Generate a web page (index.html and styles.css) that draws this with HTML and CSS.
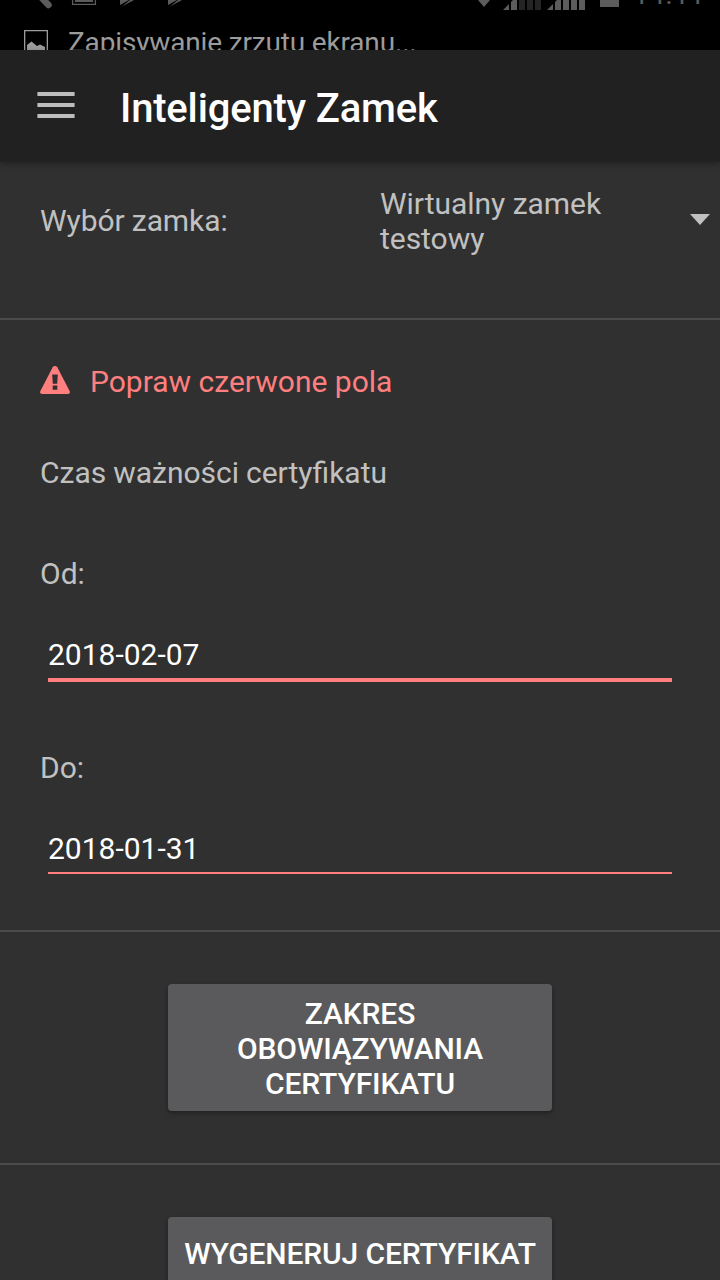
FILE: index.html
```
<!DOCTYPE html>
<html lang="pl">
<head>
<meta charset="utf-8">
<title>Inteligenty Zamek</title>
<link rel="stylesheet" href="styles.css">
</head>
<body>
<div class="screen">
  <div class="status">
    <svg class="status-icons" width="720" height="12" viewBox="0 0 720 12">
      <path d="M38 -6L48.500 5" stroke="#5c5c5c" stroke-width="6.500" stroke-linecap="round"/>
      <path d="M72.600 -16V4.400H95.400V-16" fill="none" stroke="#5c5c5c" stroke-width="1.300"/>
      <path d="M75 -8H93V2H75z" fill="#5c5c5c"/>
      <path d="M76 -3H92V0H76z" fill="#000"/>
      <path d="M120 -3V5L129 0H124V-3zM122 6.500L134 0H130zM168 -3V5L177 0H172V-3zM170 6.500L182 0H178z" fill="#5c5c5c"/>
      <path d="M478 0H490L484 7z" fill="#5c5c5c"/>
      <path d="M503 10L509 4V10zM511 2L513 0H517V10H511zM547 10L553 4V10zM555 2L557 0H561V10H555zM563 0h6V10h-6zM571 0h6V10h-6zM579 0h6V10h-6z" fill="#5c5c5c"/>
      <path d="M519 0h6V10h-6zM527 0h6V10h-6zM535 0h6V10h-6z" fill="#242424"/>
      <path d="M517 0h2V10h-2zM525 0h2V10h-2zM533 0h2V10h-2zM561 0h2V10h-2zM569 0h2V10h-2zM577 0h2V10h-2z" fill="#000"/>
      <path d="M600 0H619V7H600z" fill="#5c5c5c"/>
    </svg>
    <span class="clock">14<span class="colon">:</span>11</span>
    <div class="ticker">
      <svg width="24" height="24" viewBox="0 0 24 24">
        <path d="M.65 .65H23.350V23.350H.65z" fill="none" stroke="#9c9c9c" stroke-width="1.300"/>
        <path d="M3 24V15L7.500 11.500L13 16L16 14.500L21 17V24z" fill="#9c9c9c"/>
      </svg>
      <span>Zapisywanie zrzutu ekranu...</span>
    </div>
  </div>
  <header class="toolbar">
    <svg class="menu" width="38" height="26" viewBox="0 0 38 26">
      <path d="M.4 0H37.600V4H.4zM.4 11H37.600V15H.4zM.4 22H37.600V26H.4z" fill="#bdbdbd"/>
    </svg>
    <h1 class="title">Inteligenty Zamek</h1>
  </header>
  <main>
    <section class="lock-row">
      <span class="lock-label">Wybór zamka:</span>
      <div class="spinner">
        <span class="spinner-text">Wirtualny zamek testowy</span>
        <svg width="20" height="11" viewBox="0 0 20 11"><path d="M0 0H20L10 11z" fill="#c1c1c1"/></svg>
      </div>
    </section>
    <section class="dates">
      <div class="error">
        <svg width="30" height="28" viewBox="0 0 30 28">
          <path d="M15 0Q16.500 0 17.300 1.300L29.600 25Q30.400 27.800 28 28H2Q-.4 27.800 .4 25L12.700 1.300Q13.500 0 15 0z" fill="#ff7f7f"/>
          <path d="M12.200 8.500H17.800L17.200 17.700H12.800zM12.700 19.600H17.300V23.800H12.700z" fill="#303030"/>
        </svg>
        <span>Popraw czerwone pola</span>
      </div>
      <p class="heading">Czas ważności certyfikatu</p>
      <p class="label from">Od:</p>
      <div class="field focused">2018-02-07</div>
      <p class="label to">Do:</p>
      <div class="field">2018-01-31</div>
    </section>
    <section class="action"><button class="btn">Zakres obowiązywania certyfikatu</button></section>
    <section class="action last"><button class="btn single">Wygeneruj certyfikat</button></section>
  </main>
</div>
</body>
</html>
```
FILE: styles.css
```
* { box-sizing: border-box; }
body { margin: 0; background: #303030; }
.screen {
  width: 720px; height: 1280px; overflow: hidden;
  display: flex; flex-direction: column;
  font: 400 30px/35px Roboto, sans-serif; color: #c1c1c1; background: #303030;
}
.status { position: relative; height: 50px; flex: none; overflow: hidden; background: #000; padding-top: 30px; }
.status-icons { position: absolute; left: 0; top: 0; }
.clock { position: absolute; left: 633px; top: -22px; font-size: 28px; line-height: 33px; color: #5c5c5c; white-space: nowrap; }
.colon { margin: 0 1px; }
.ticker { display: flex; gap: 20px; padding-left: 24px; font-size: 28px; line-height: 33px; letter-spacing: -.16px; color: #9c9c9c; white-space: nowrap; }
.ticker span { margin-top: -4px; }
.toolbar {
  position: relative; flex: none; height: 112px; background: #212121;
  display: flex; align-items: center; padding: 0 37px; gap: 45px;
  box-shadow: 0 2px 7px rgba(0, 0, 0, .32);
}
.menu { margin-top: -2px; }
.title { margin: 4px 0 0; font-size: 40px; line-height: 47px; font-weight: 500; letter-spacing: -.18px; color: #fff; }
.lock-row { display: flex; height: 158px; border-bottom: 2px solid #4b4b4b; padding: 24px 10px 0 40px; }
.lock-label { width: 340px; flex: none; padding-top: 17px; letter-spacing: -.09px; }
.spinner { flex: 1; height: 70px; display: flex; align-items: center; justify-content: space-between; }
.spinner-text { width: 240px; letter-spacing: -.03px; }
.spinner svg { margin-bottom: 3px; }
.dates { height: 612px; border-bottom: 2px solid #4b4b4b; padding: 44px 40px 0; }
.error { display: flex; gap: 20px; color: #ff7f7f; }
.error svg { margin-top: 2px; }
.heading, .label { margin: 0; }
.heading { padding-top: 56px; word-spacing: -.5px; }
.from { padding-top: 66px; }
.to { padding-top: 68px; }
.field { margin: 46px 8px 0; height: 43px; border-bottom: 2px solid #ff7f7f; color: #fff; }
.focused { border-bottom-width: 4px; height: 45px; }
.action { height: 233px; border-bottom: 2px solid #4b4b4b; padding-top: 52px; }
.last { border: 0; }
.btn {
  display: block; width: 384px; margin: 0 auto; padding: 12px 16px 10px; border: 0; border-radius: 4px;
  background: #5a5a5c; color: #fff; font: 500 30px/35px Roboto, sans-serif; letter-spacing: -.12px; text-transform: uppercase; text-align: center;
  box-shadow: 0 2px 4px rgba(0, 0, 0, .35);
}
.single { height: 88px; padding: 0 0 15px; white-space: nowrap; }
```
